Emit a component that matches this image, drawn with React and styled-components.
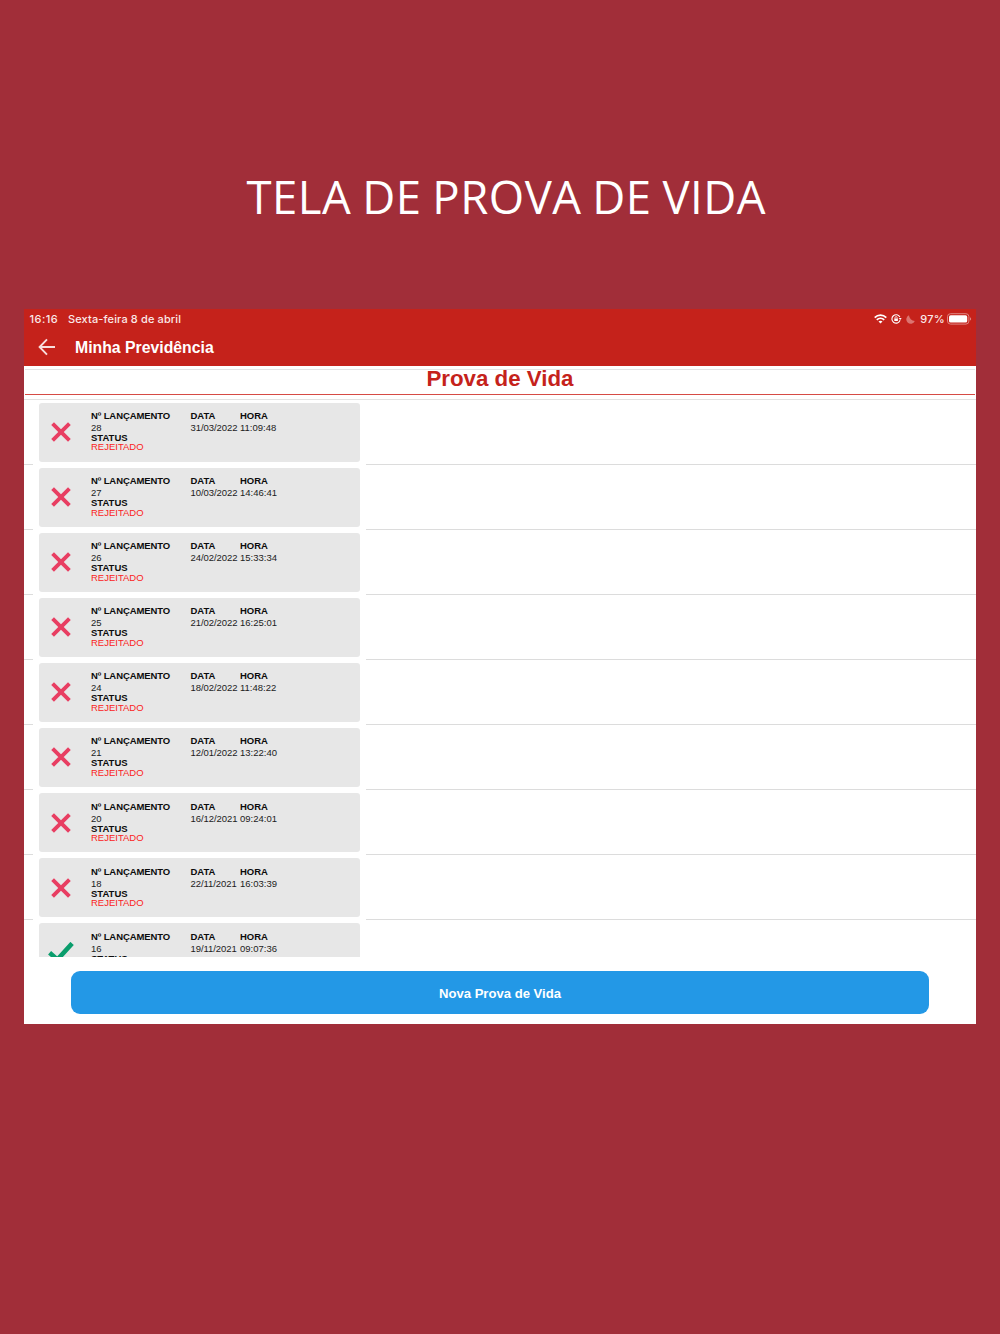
import React from 'react'
import styled, { createGlobalStyle } from 'styled-components'

const entries = [
  { id: 28, date: '31/03/2022', time: '11:09:48' },
  { id: 27, date: '10/03/2022', time: '14:46:41' },
  { id: 26, date: '24/02/2022', time: '15:33:34' },
  { id: 25, date: '21/02/2022', time: '16:25:01' },
  { id: 24, date: '18/02/2022', time: '11:48:22' },
  { id: 21, date: '12/01/2022', time: '13:22:40' },
  { id: 20, date: '16/12/2021', time: '09:24:01' },
  { id: 18, date: '22/11/2021', time: '16:03:39' },
  { id: 16, date: '19/11/2021', time: '09:07:36', approved: true },
]

const WifiIcon = () => (
  <svg width="13" height="10" viewBox="0 0 13 10" fill="none" stroke="#fff" strokeWidth="1.7">
    <path d="M0.7 3.6C4 0.4 9 0.4 12.3 3.6" />
    <path d="M2.8 5.9C4.9 3.9 8.1 3.9 10.2 5.9" />
    <path d="M6.5 9.4L4.5 7.4C5.6 6.4 7.4 6.4 8.5 7.4Z" fill="#fff" stroke="none" />
  </svg>
)

const LockIcon = () => (
  <svg width="11" height="10" viewBox="0 0 11 10" fill="none" stroke="#fff">
    <path d="M8.9 3.1A4.2 4.2 0 1 0 9.1 6.3" strokeWidth="1.1" />
    <path d="M7.7 4H10.7L9.2 6Z" fill="#fff" stroke="none" />
    <rect x="3.3" y="4.4" width="3.6" height="2.7" rx="0.4" fill="#fff" stroke="none" />
    <path d="M4 4.6V3.7A1.1 1.1 0 0 1 6.2 3.7V4.6" strokeWidth="0.8" />
  </svg>
)

const MoonIcon = () => (
  <svg width="9" height="9" viewBox="0 0 9 9">
    <path d="M3 0.3A4.4 4.4 0 1 0 8.8 6A5.8 5.8 0 0 1 3 0.3Z" fill="#dc7470" />
  </svg>
)

const BatteryIcon = () => (
  <svg width="25" height="12" viewBox="0 0 25 12">
    <rect x="0.5" y="0.7" width="21.4" height="10.4" rx="3" fill="none" stroke="#e08581" />
    <rect x="2" y="2.2" width="18.2" height="7.4" rx="1.7" fill="#fff" />
    <path d="M23 4.2C24.5 4.7 24.5 7.1 23 7.6Z" fill="#e08581" />
  </svg>
)

const BackIcon = () => (
  <svg width="18" height="18" viewBox="0 0 18 18" fill="none" stroke="#f8dedd" strokeWidth="1.9">
    <path d="M17 9H2M9 1.4L1.6 9L9 16.6" />
  </svg>
)

const RejectedIcon = () => (
  <svg width="20" height="20" viewBox="0 0 20 20" fill="none" stroke="#e83e62" strokeWidth="3.9">
    <path d="M1.6 1.6L18.4 18.4M18.4 1.6L1.6 18.4" />
  </svg>
)

const ApprovedIcon = () => (
  <svg width="26" height="22" viewBox="0 0 26 22" fill="none" stroke="#0a9d6c" strokeWidth="4.6">
    <path d="M1.6 10.8L9.4 17.6L24.1 1.4" />
  </svg>
)

const Entry = ({ id, date, time, approved }) => (
  <Row>
    <CardArea>
      <Card>
        <IconBox>{approved ? <ApprovedIcon /> : <RejectedIcon />}</IconBox>
        <MainInfo>
          <Label $spacing={-0.1}>Nº LANÇAMENTO</Label>
          <Value>{id}</Value>
          <Label $height={10.4}>STATUS</Label>
          <Status $approved={approved}>{approved ? 'APROVADO' : 'REJEITADO'}</Status>
        </MainInfo>
        <DateInfo>
          <Label>DATA</Label>
          <Value $spacing={-0.06}>{date}</Value>
        </DateInfo>
        <TimeInfo>
          <Label>HORA</Label>
          <Value>{time}</Value>
        </TimeInfo>
      </Card>
    </CardArea>
  </Row>
)

const App = () => {
  return (
    <Page>
      <GlobalStyle />
      <Title>TELA DE PROVA DE VIDA</Title>
      <Tablet>
        <StatusBar>
          <Clock>16:16</Clock>
          <Today>Sexta-feira 8 de abril</Today>
          <StatusIcons>
            <WifiIcon />
            <LockIcon />
            <MoonIcon />
            <Percent>97%</Percent>
            <BatteryIcon />
          </StatusIcons>
        </StatusBar>
        <NavBar>
          <BackIcon />
          <NavTitle>Minha Previdência</NavTitle>
        </NavBar>
        <Heading>Prova de Vida</Heading>
        <List>
          {entries.map((entry) => (
            <Entry key={entry.id} {...entry} />
          ))}
        </List>
        <Footer>
          <NewButton>Nova Prova de Vida</NewButton>
        </Footer>
      </Tablet>
    </Page>
  )
}

export default App

const GlobalStyle = createGlobalStyle`
  * {
    box-sizing: border-box;
  }
  body {
    margin: 0;
    background: #a12e39;
    font-family: "Liberation Sans", Arial, sans-serif;
  }
  svg {
    display: block;
    flex-shrink: 0;
  }
`
const Page = styled.div`
  width: 1000px;
  height: 1334px;
  padding: 0 24px;
  background: #a12e39;
  overflow: hidden;
`
const Title = styled.h1`
  margin: 0;
  height: 309px;
  padding: 166px 0 0 222.5px;
  font-family: "Open Sans", sans-serif;
  font-weight: 400;
  font-size: 45.5px;
  line-height: 60px;
  letter-spacing: 0.5px;
  word-spacing: -1.5px;
  color: #fff;
  white-space: nowrap;
`
const Tablet = styled.main`
  width: 952px;
  height: 714.5px;
  display: flex;
  flex-direction: column;
  background: #fff;
`
const StatusBar = styled.div`
  height: 21px;
  flex-shrink: 0;
  display: flex;
  align-items: center;
  padding: 0 4px 1px 5.5px;
  background: #c5221b;
  color: #fbe9e8;
  font-family: Inter, sans-serif;
  font-weight: 500;
  font-size: 11px;
  line-height: 20px;
  white-space: nowrap;
`
const Clock = styled.span`
  width: 38.5px;
  letter-spacing: 0.45px;
`
const Today = styled.span`
  letter-spacing: 0.13px;
`
const StatusIcons = styled.div`
  margin-left: auto;
  display: flex;
  align-items: center;
  gap: 4px;
`
const Percent = styled.span`
  margin: 0 -2px 0 1px;
  letter-spacing: 0.3px;
`
const NavBar = styled.header`
  height: 35.5px;
  flex-shrink: 0;
  display: flex;
  align-items: center;
  gap: 19px;
  padding: 0 14px 1px 14px;
  background: #c5221b;
`
const NavTitle = styled.span`
  padding-top: 1px;
  font-weight: 700;
  font-size: 15.8px;
  line-height: 20px;
  color: #fff;
`
const Heading = styled.h2`
  height: 26px;
  flex-shrink: 0;
  margin: 3px 1px 0;
  border-top: 1px solid #e4e4e4;
  border-bottom: 1px solid #d64b45;
  font-weight: 700;
  font-size: 22.3px;
  line-height: 17px;
  text-align: center;
  color: #c5221b;
`
const List = styled.div`
  height: 558px;
  flex-shrink: 0;
  margin-top: 4px;
  border-top: 1px solid #e2e2e2;
  overflow: hidden;
`
const Row = styled.div`
  height: 65.1px;
  border-bottom: 1px solid #dcdcdc;
`
const CardArea = styled.div`
  width: 333px;
  height: 65.1px;
  margin-left: 9px;
  padding: 3px 6px;
  background: #fff;
`
const Card = styled.div`
  height: 59px;
  display: grid;
  grid-template-columns: 44px 99.5px 49.5px 1fr;
  padding-left: 8px;
  border-radius: 3px;
  background: #e7e7e7;
`
const IconBox = styled.div`
  width: 28px;
  display: flex;
  align-items: center;
  justify-content: center;
`
const MainInfo = styled.div`
  padding-top: 7.5px;
`
const DateInfo = styled.div`
  padding-top: 7.5px;
`
const TimeInfo = styled.div`
  padding-top: 7.5px;
`
const Label = styled.p`
  margin: 0;
  font-weight: 700;
  font-size: 9.5px;
  line-height: ${({ $height }) => $height || 12}px;
  letter-spacing: ${({ $spacing }) => $spacing || 0}px;
  color: #0c0c0c;
  white-space: nowrap;
`
const Value = styled.p`
  margin: 0;
  font-size: 9.5px;
  line-height: 11px;
  letter-spacing: ${({ $spacing }) => $spacing || 0}px;
  color: #1c1c1c;
  white-space: nowrap;
`
const Status = styled.p`
  margin: 0;
  font-size: 9.5px;
  line-height: 8.6px;
  color: ${({ $approved }) => ($approved ? '#0a9d6c' : '#fb2222')};
`
const Footer = styled.footer`
  padding: 14.5px 47px 0;
`
const NewButton = styled.button`
  width: 100%;
  height: 43px;
  padding: 2px 0 0;
  border: none;
  border-radius: 9px;
  background: #2398e6;
  font-family: "Liberation Sans", Arial, sans-serif;
  font-weight: 700;
  font-size: 13.1px;
  color: #fff;
`
